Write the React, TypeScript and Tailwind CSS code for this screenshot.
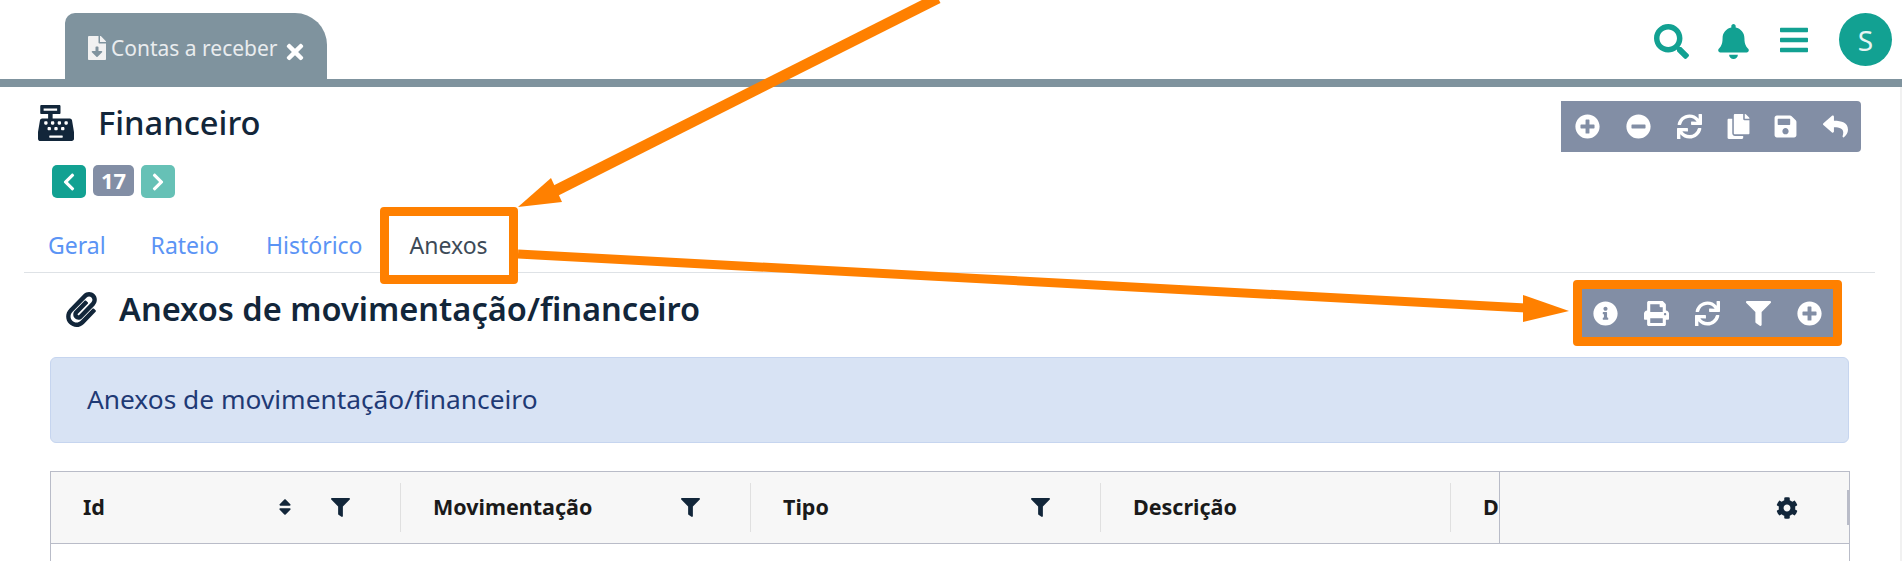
import { FaCashRegister, FaFileDownload, FaTimes, FaSearch, FaBell, FaBars, FaPlusCircle, FaMinusCircle, FaSync, FaCopy, FaSave, FaReply, FaInfoCircle, FaPrint, FaFilter, FaCog, FaPaperclip, FaSort, FaChevronLeft, FaChevronRight } from "react-icons/fa";

const columns = [
  { label: "Id", sort: true, filter: true },
  { label: "Movimentação", filter: true },
  { label: "Tipo", filter: true },
  { label: "Descrição" },
  { label: "Data" },
];

export default function App() {
  return (
    <div className="relative h-[561px] w-[1902px] overflow-hidden bg-white text-[#12263a] font-['Noto_Sans','Open_Sans',sans-serif]">
      <header className="flex h-[79px] items-end justify-between pl-[65px] pr-[10px]">
        <div className="flex h-[66px] w-[262px] items-start rounded-tr-[32px] rounded-tl-[10px] bg-[#7f939e] pl-[20px] pt-[23px] text-white">
          <FaFileDownload className="shrink-0 text-[24px] text-[#f1f1f1]" />
          <span className="ml-[2px] w-[170px] whitespace-nowrap text-[21px] leading-[24px] text-[#e9ecee]">Contas a receber</span>
          <FaTimes className="ml-[2px] mt-[4px] shrink-0 text-[24px]" />
        </div>
        <div className="mb-[13px] flex items-center text-[#12a192]">
          <FaSearch className="mt-[3px] text-[35px]" />
          <FaBell className="ml-[27px] mt-[3px] text-[35px]" />
          <FaBars className="ml-[27px] mt-[1px] text-[32px]" />
          <div className="ml-[29px] flex h-[53px] w-[53px] items-center justify-center rounded-full bg-[#12a192] text-[28px] text-[#e6f5f3]">S</div>
        </div>
      </header>
      <div className="h-[8px] bg-[#7f939e]" />

      <div className="mt-[14px] flex items-start justify-between pl-[38px] pr-[41px]">
        <div className="flex items-center">
          <FaCashRegister className="text-[36px]" />
          <h1 className="ml-[24px] text-[32.7px] font-medium leading-[44px]">Financeiro</h1>
        </div>
        <div className="flex h-[51px] w-[300px] items-center rounded-r-[4px] bg-[#828ea5] pl-[14px] text-[25px] text-white">
          <FaPlusCircle />
          <FaMinusCircle className="ml-[26px]" />
          <FaSync className="ml-[26px]" />
          <FaCopy className="ml-[24px]" />
          <FaSave className="ml-[22px]" />
          <FaReply className="ml-[25px]" />
        </div>
      </div>

      <div className="mt-[13px] flex items-start pl-[52px] text-white">
        <button className="flex h-[33px] w-[34px] items-center justify-center rounded-[5px] bg-[#12a192] text-[20px]"><FaChevronLeft /></button>
        <span className="ml-[7px] flex h-[31px] w-[41px] items-center justify-center rounded-[5px] bg-[#828ea5] text-[22px] font-bold">17</span>
        <button className="ml-[7px] flex h-[33px] w-[34px] items-center justify-center rounded-[5px] bg-[#66c1b6] text-[20px]"><FaChevronRight /></button>
      </div>

      <nav className="ml-[24px] mr-[27px] mt-[9px] flex h-[66px] items-start border-b border-[#dee2e6] text-[23px] text-[#5b94f5]">
        <a className="ml-[24px] mt-[23px] leading-[30px]">Geral</a>
        <a className="ml-[45px] mt-[23px] leading-[30px]">Rateio</a>
        <a className="ml-[47px] mt-[23px] leading-[30px]">Histórico</a>
        <a className="relative z-10 ml-[17px] flex h-[77px] w-[138px] items-center justify-center rounded-[4px] border-[9px] border-[#ff8000] bg-white text-[#3d4a57]">Anexos</a>
      </nav>

      <div className="mt-[7px] flex items-start justify-between pl-[64px] pr-[60px]">
        <div className="flex items-center">
          <FaPaperclip className="mt-[8px] text-[35px]" />
          <h2 className="ml-[20px] mt-[7px] text-[32.6px] font-semibold leading-[44px]">Anexos de movimentação/financeiro</h2>
        </div>
        <div className="flex h-[66px] w-[269px] items-center justify-between rounded-[4px] border-[9px] border-[#ff8000] bg-[#828ea5] px-[11px] text-[25px] text-white">
          <FaInfoCircle /><FaPrint /><FaSync /><FaFilter /><FaPlusCircle />
        </div>
      </div>

      <div className="mx-[50px] mt-[11px] flex h-[86px] w-[1799px] items-center rounded-[6px] border border-[#c6d5ef] bg-[#d8e3f4] pl-[36px] text-[26.3px] text-[#1f3a75]">
        Anexos de movimentação/financeiro
      </div>

      <div className="relative mx-[50px] mt-[28px] h-[90px] w-[1800px] border-x border-t border-[#b9bcc8]">
        <div className="flex h-[72px] overflow-hidden border-b border-[#b9bcc8] bg-[#f7f7f7]">
          {columns.map((c) => (
            <div key={c.label} className="relative flex h-full w-[350px] shrink-0 items-center pl-[32px] text-[21.5px] font-bold text-[#1a1a1a]">
              <span>{c.label}</span>
              {c.sort && <FaSort className="absolute left-[224px] top-[25px] text-[20px] text-[#12263a]" />}
              {c.filter && <FaFilter className="absolute left-[280px] top-[26px] text-[19px] text-[#12263a]" />}
              <div className="absolute right-0 top-[11px] h-[49px] w-px bg-[#e0e0e0]" />
            </div>
          ))}
        </div>
        <div className="absolute right-0 top-0 flex h-[72px] w-[350px] items-center justify-end border-b border-l border-[#b9bcc8] bg-[#f7f7f7] pr-[51px]">
          <FaCog className="text-[22px] text-[#12263a]" />
          <div className="absolute right-0 top-[18px] h-[35px] w-[2px] bg-[#b9bcc8]" />
        </div>
      </div>

      <div className="absolute right-0 top-[87px] h-[474px] w-[2px] bg-[#f1f1f1]" />

      <svg className="pointer-events-none absolute left-0 top-0 z-20" width="1902" height="561" viewBox="0 0 1902 561">
        <line x1="938" y1="-2" x2="555" y2="191" stroke="#ff8000" strokeWidth="11" />
        <polygon points="518,207 551,178 562,202" fill="#ff8000" />
        <line x1="518" y1="254" x2="1526" y2="308" stroke="#ff8000" strokeWidth="9" />
        <polygon points="1569,311 1523,295 1523,322" fill="#ff8000" />
      </svg>
    </div>
  );
}
